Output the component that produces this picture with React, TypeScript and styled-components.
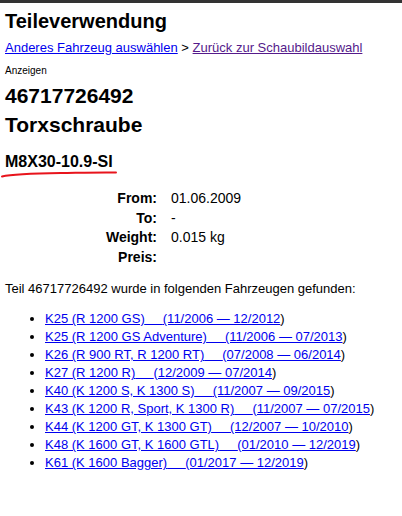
import { Fragment } from "react";
import styled, { createGlobalStyle } from "styled-components";

const GlobalStyle = createGlobalStyle`
    body {
        margin: 0;
        background: #fff;
        color: #000;
        font-family: "Liberation Sans", Arial, sans-serif;
    }
`;

const TopBar = styled.div`
    height: 3px;
    background: #333;
`;

const Page = styled.div`
    padding: 0 5px;
`;

const Title = styled.h1`
    margin: 6px 0 0;
    font-size: 20px;
    line-height: 24px;
    font-weight: bold;
`;

const Breadcrumb = styled.div`
    margin-top: 7px;
    font-size: 13px;
    line-height: 16px;
`;

const Link = styled.a<{ $visited?: boolean }>`
    color: ${p => (p.$visited ? "#551a8b" : "#0000ee")};
    text-decoration: underline;
`;

const AdLabel = styled.div`
    margin-top: 9px;
    font-size: 10px;
    line-height: 12px;
`;

const Heading = styled.h2<{ $gap: number }>`
    margin: ${p => p.$gap}px 0 0;
    font-size: 21px;
    line-height: 26px;
    font-weight: bold;
`;

const PartCode = styled.div`
    position: relative;
    display: inline-block;
    margin-top: 14px;
    font-size: 16px;
    line-height: 20px;
    font-weight: bold;
`;

const Scribble = styled.svg`
    position: absolute;
    left: -4px;
    top: 18px;
    overflow: visible;
`;

const InfoTable = styled.div`
    display: grid;
    grid-template-columns: 152px auto;
    column-gap: 14px;
    margin-top: 17px;
    font-size: 14px;
    line-height: 19.5px;
`;

const Label = styled.div`
    text-align: right;
    font-weight: bold;
`;

const Value = styled.div``;

const Intro = styled.p`
    margin: 14px 0 0;
    font-size: 13px;
    line-height: 16px;
`;

const VehicleList = styled.ul`
    margin: 13px 0 0;
    padding-left: 40px;
    font-size: 13px;
    line-height: 18px;
`;

const info = [
    { label: "From:", value: "01.06.2009" },
    { label: "To:", value: "-" },
    { label: "Weight:", value: "0.015 kg" },
    { label: "Preis:", value: "" },
];

const vehicles = [
    { model: "K25 (R 1200 GS)", range: "(11/2006 — 12/2012" },
    { model: "K25 (R 1200 GS Adventure)", range: "(11/2006 — 07/2013" },
    { model: "K26 (R 900 RT, R 1200 RT)", range: "(07/2008 — 06/2014" },
    { model: "K27 (R 1200 R)", range: "(12/2009 — 07/2014" },
    { model: "K40 (K 1200 S, K 1300 S)", range: "(11/2007 — 09/2015" },
    { model: "K43 (K 1200 R, Sport, K 1300 R)", range: "(11/2007 — 07/2015" },
    { model: "K44 (K 1200 GT, K 1300 GT)", range: "(12/2007 — 10/2010" },
    { model: "K48 (K 1600 GT, K 1600 GTL)", range: "(01/2010 — 12/2019" },
    { model: "K61 (K 1600 Bagger)", range: "(01/2017 — 12/2019" },
];

const gap = "\u00a0\u00a0\u00a0\u00a0\u00a0";

const App = () => (
    <>
        <GlobalStyle />
        <TopBar />
        <Page>
            <Title>Teileverwendung</Title>
            <Breadcrumb>
                <Link href="#">Anderes Fahrzeug auswählen</Link> &gt;{" "}
                <Link href="#" $visited>
                    Zurück zur Schaubildauswahl
                </Link>
            </Breadcrumb>
            <AdLabel>Anzeigen</AdLabel>
            <Heading $gap={6}>46717726492</Heading>
            <Heading $gap={3}>Torxschraube</Heading>
            <PartCode>
                M8X30-10.9-SI
                <Scribble width="116" height="8" viewBox="0 0 116 8">
                    <path
                        d="M1 6.5 C 12 4, 30 3.5, 60 3 S 100 2.2, 115 2.5"
                        fill="none"
                        stroke="#e8141c"
                        strokeWidth="2"
                        strokeLinecap="round"
                    />
                </Scribble>
            </PartCode>
            <InfoTable>
                {info.map(row => (
                    <Fragment key={row.label}>
                        <Label>{row.label}</Label>
                        <Value>{row.value}</Value>
                    </Fragment>
                ))}
            </InfoTable>
            <Intro>Teil 46717726492 wurde in folgenden Fahrzeugen gefunden:</Intro>
            <VehicleList>
                {vehicles.map(v => (
                    <li key={v.model}>
                        <Link href="#">
                            {v.model}
                            {gap}
                            {v.range}
                        </Link>
                        )
                    </li>
                ))}
            </VehicleList>
        </Page>
    </>
);

export default App;
